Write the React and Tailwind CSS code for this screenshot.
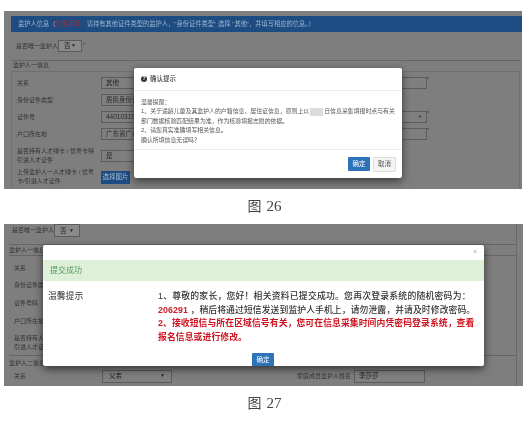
const cjk = "font-['Liberation_Sans','Noto_Sans_CJK_SC',sans-serif]"

function Field({ label, right, className = '', children }) {
  return (
    <div className={`flex items-center ${className}`}>
      <div className="w-[84px] shrink-0 text-[6px] leading-[9px] text-[#333]">{label}</div>
      <div className="w-[60px]">{children}</div>
      {right && <div className="ml-[189px] flex items-start">{right}<span className="text-[5px] leading-none text-[#333]">*</span></div>}
    </div>
  )
}

function Box({ children, className = '' }) {
  return (
    <div className={`flex h-[12px] items-center border border-[#5c5c5c] bg-[#7f7f7f] px-[4px] text-[6.5px] leading-none text-[#2a2a2a] ${className}`}>
      {children}
    </div>
  )
}

function Caption({ num }) {
  return (
    <div className="flex h-[35px] items-center justify-center gap-[5px] text-[14px] text-[#444]">
      <span>图</span>
      <span className="font-['Liberation_Serif',serif] text-[15px]">{num}</span>
    </div>
  )
}

function FirstShot() {
  return (
    <div className="relative ml-[4px] h-[178px] w-[518px] overflow-hidden bg-[#7e7e7e] pl-[7px] pt-[5px]">
      <div className="flex h-[16px] items-center whitespace-nowrap bg-[#1c4c82] pl-[7px] text-[6.25px] text-[#9fb4cc]">
        监护人信息（<span className="text-[#b8272b]">红色字体：</span>请持有其他证件类型的监护人，"身份证件类型" 选择 "其他"，并填写相应的信息。）
      </div>
      <div className="flex h-[28px] items-center pl-[5px] text-[6px] text-[#333]">
        是否唯一监护人
        <div className="flex h-[12px] w-[24px] items-center justify-between border border-[#5c5c5c] bg-[#8a8a8a] px-[5px] text-[6.5px] text-[#222]">
          否<span className="text-[5px]">▼</span>
        </div>
        <span className="ml-[1px] text-[5px]">*</span>
      </div>
      <div className="mr-[2px] flex h-[8px] items-end border-t border-[#666] pl-[2px] text-[6px] leading-none text-[#333]">监护人一信息</div>
      <div className="mr-[2px] mt-[3px] h-[120px] border border-[#707070] pl-[5px] pt-[5px]">
        <Field label="关系" right={<Box className="w-[77px]" />}><Box>其他</Box></Field>
        <Field label="身份证件类型" className="mt-[5px]"><Box>居民身份证</Box></Field>
        <Field
          label="证件号"
          className="mt-[5px]"
          right={<Box className="w-[77px] justify-end"><span className="text-[4px]">▼</span></Box>}
        >
          <Box>44010319</Box>
        </Field>
        <Field label="户口所在地" className="mt-[5px]" right={<Box className="w-[77px] bg-[#6f6f6f]" />}><Box>广东省广州</Box></Field>
        <Field label={<>是否持有人才绿卡 / 优粤卡特<br />引进人才证件</>} className="mt-[7px]"><Box>是</Box></Field>
        <Field label={<>上传监护人一人才绿卡 / 优粤<br />卡/引进人才证件</>} className="mt-[3px]">
          <div className="flex h-[13px] w-[29px] items-center justify-center bg-[#1c4c82] text-[6.5px] text-[#a8bbd0]">选择图片</div>
        </Field>
      </div>
      <div className="absolute left-[130px] top-[57px] flex h-[110px] w-[268px] flex-col rounded-[2px] bg-white text-[5.9px] text-[#555] shadow-[0_3px_8px_rgba(0,0,0,0.55)]">
        <div className="flex h-[23px] items-center gap-[3px] border-b border-[#eee] pl-[7px] text-[6.5px] font-medium text-[#444]">
          <span className="flex h-[6px] w-[6px] items-center justify-center rounded-full bg-[#333] text-[5px] font-bold text-white">?</span>
          确认提示
        </div>
        <div className="h-[59px] border-b border-[#eee] pl-[7px] pt-[7px] leading-[9.4px]">
          <div>温馨提醒：</div>
          <div className="whitespace-nowrap">
            1、关于适龄儿童及其监护人的户籍信息、居住证信息，原则上以
            <span className="mx-[1px] inline-block h-[8px] w-[13px] bg-[#dcdcdc] align-middle" />
            日信息采集填报时点与有关
          </div>
          <div>部门数据核验匹配结果为准，作为核验填报志愿的依据。</div>
          <div>2、请您真实准确填写相关信息。</div>
          <div>确认所填信息无误吗？</div>
        </div>
        <div className="flex flex-1 items-center justify-end gap-[3px] pr-[6px] text-[6.5px]">
          <div className="flex h-[14px] w-[22px] items-center justify-center rounded-[1px] bg-[#2d73b9] text-white">确定</div>
          <div className="flex h-[15px] w-[23px] items-center justify-center rounded-[1px] border border-[#ddd] bg-[#f4f4f4] text-[#555]">取消</div>
        </div>
      </div>
    </div>
  )
}

function SecondShot() {
  return (
    <div className="relative ml-[4px] h-[162px] w-[519px] overflow-hidden bg-[#7e7e7e] pl-[5px] pr-[6px] text-[6px] text-[#333]">
      <div className="h-full border-r border-[#6a6a6a]">
        <div className="flex h-[20px] items-start pl-[3px]">
          <div className="flex h-[13px] items-center">是否唯一监护人</div>
          <div className="flex h-[13px] w-[26px] items-center justify-between border border-[#5c5c5c] bg-[#8a8a8a] px-[5px] text-[6.5px] text-[#222]">
            否<span className="text-[5px]">▼</span>
          </div>
        </div>
        <div className="flex h-[12px] items-center border-y border-[#666] leading-none">监护人一信息</div>
        <div className="pl-[5px] pt-[8px] leading-[9px]">
          <div className="h-[9px]">关系</div>
          <div className="mt-[8px] h-[9px]">身份证件类型</div>
          <div className="mt-[9px] h-[9px]">证件号码</div>
          <div className="mt-[9px] h-[9px]">户口所在地</div>
          <div className="mt-[8px]">是否持有人才绿卡<br />引进人才证件</div>
        </div>
        <div className="mt-[3px] border-t border-[#666] pt-[3px] leading-[9px]">监护人二信息</div>
        <div className="flex h-[16px] items-center pl-[5px]">
          <div className="w-[88px]">关系</div>
          <div className="flex h-[13px] w-[70px] items-center justify-between border border-[#5c5c5c] bg-[#808080] px-[6px] text-[6.5px] text-[#222]">
            父亲<span className="text-[5px]">▼</span>
          </div>
          <div className="ml-[125px] w-[57px] whitespace-nowrap">家庭成员监护人姓名</div>
          <div className="flex h-[13px] w-[71px] items-center border border-[#5c5c5c] bg-[#808080] px-[4px] text-[6.5px] text-[#222]">李莎莎</div>
        </div>
      </div>
      <div className="absolute left-[39px] top-[21px] h-[121px] w-[441px] rounded-[2px] bg-white shadow-[0_3px_8px_rgba(0,0,0,0.6)]">
        <div className="flex h-[15px] items-center justify-end pr-[7px] text-[7px] text-[#aaa]">×</div>
        <div className="flex h-[21px] items-center bg-[#dff0d8] pl-[7px] text-[8px] text-[#4e9a57]">提交成功</div>
        <div className="flex pt-[9px]">
          <div className="w-[115px] pl-[5px] text-[8.8px] leading-[13.5px] text-[#333]">温馨提示</div>
          <div className="whitespace-nowrap text-[8.8px] font-medium leading-[13.5px] tracking-[0.1px] text-[#333]">
            <div className="tracking-[0.25px]">1、尊敬的家长，您好！相关资料已提交成功。您再次登录系统的随机密码为：</div>
            <div><span className="font-bold text-[#c9202c]">206291</span> ，稍后将通过短信发送到监护人手机上，请勿泄露，并请及时修改密码。</div>
            <div className="font-bold text-[#d0121f]">2、接收短信与所在区域信号有关，您可在信息采集时间内凭密码登录系统，查看</div>
            <div className="font-bold text-[#d0121f]">报名信息或进行修改。</div>
          </div>
        </div>
        <div className="absolute bottom-0 left-[209px] flex h-[13px] w-[22px] items-center justify-center rounded-t-[1px] bg-[#2d73b9] text-[6.5px] text-white">确定</div>
      </div>
    </div>
  )
}

export default function App() {
  return (
    <div className={`h-[422px] w-[529px] overflow-hidden bg-white pt-[11px] blur-[0.35px] ${cjk}`}>
      <FirstShot />
      <Caption num="26" />
      <SecondShot />
      <Caption num="27" />
    </div>
  )
}
